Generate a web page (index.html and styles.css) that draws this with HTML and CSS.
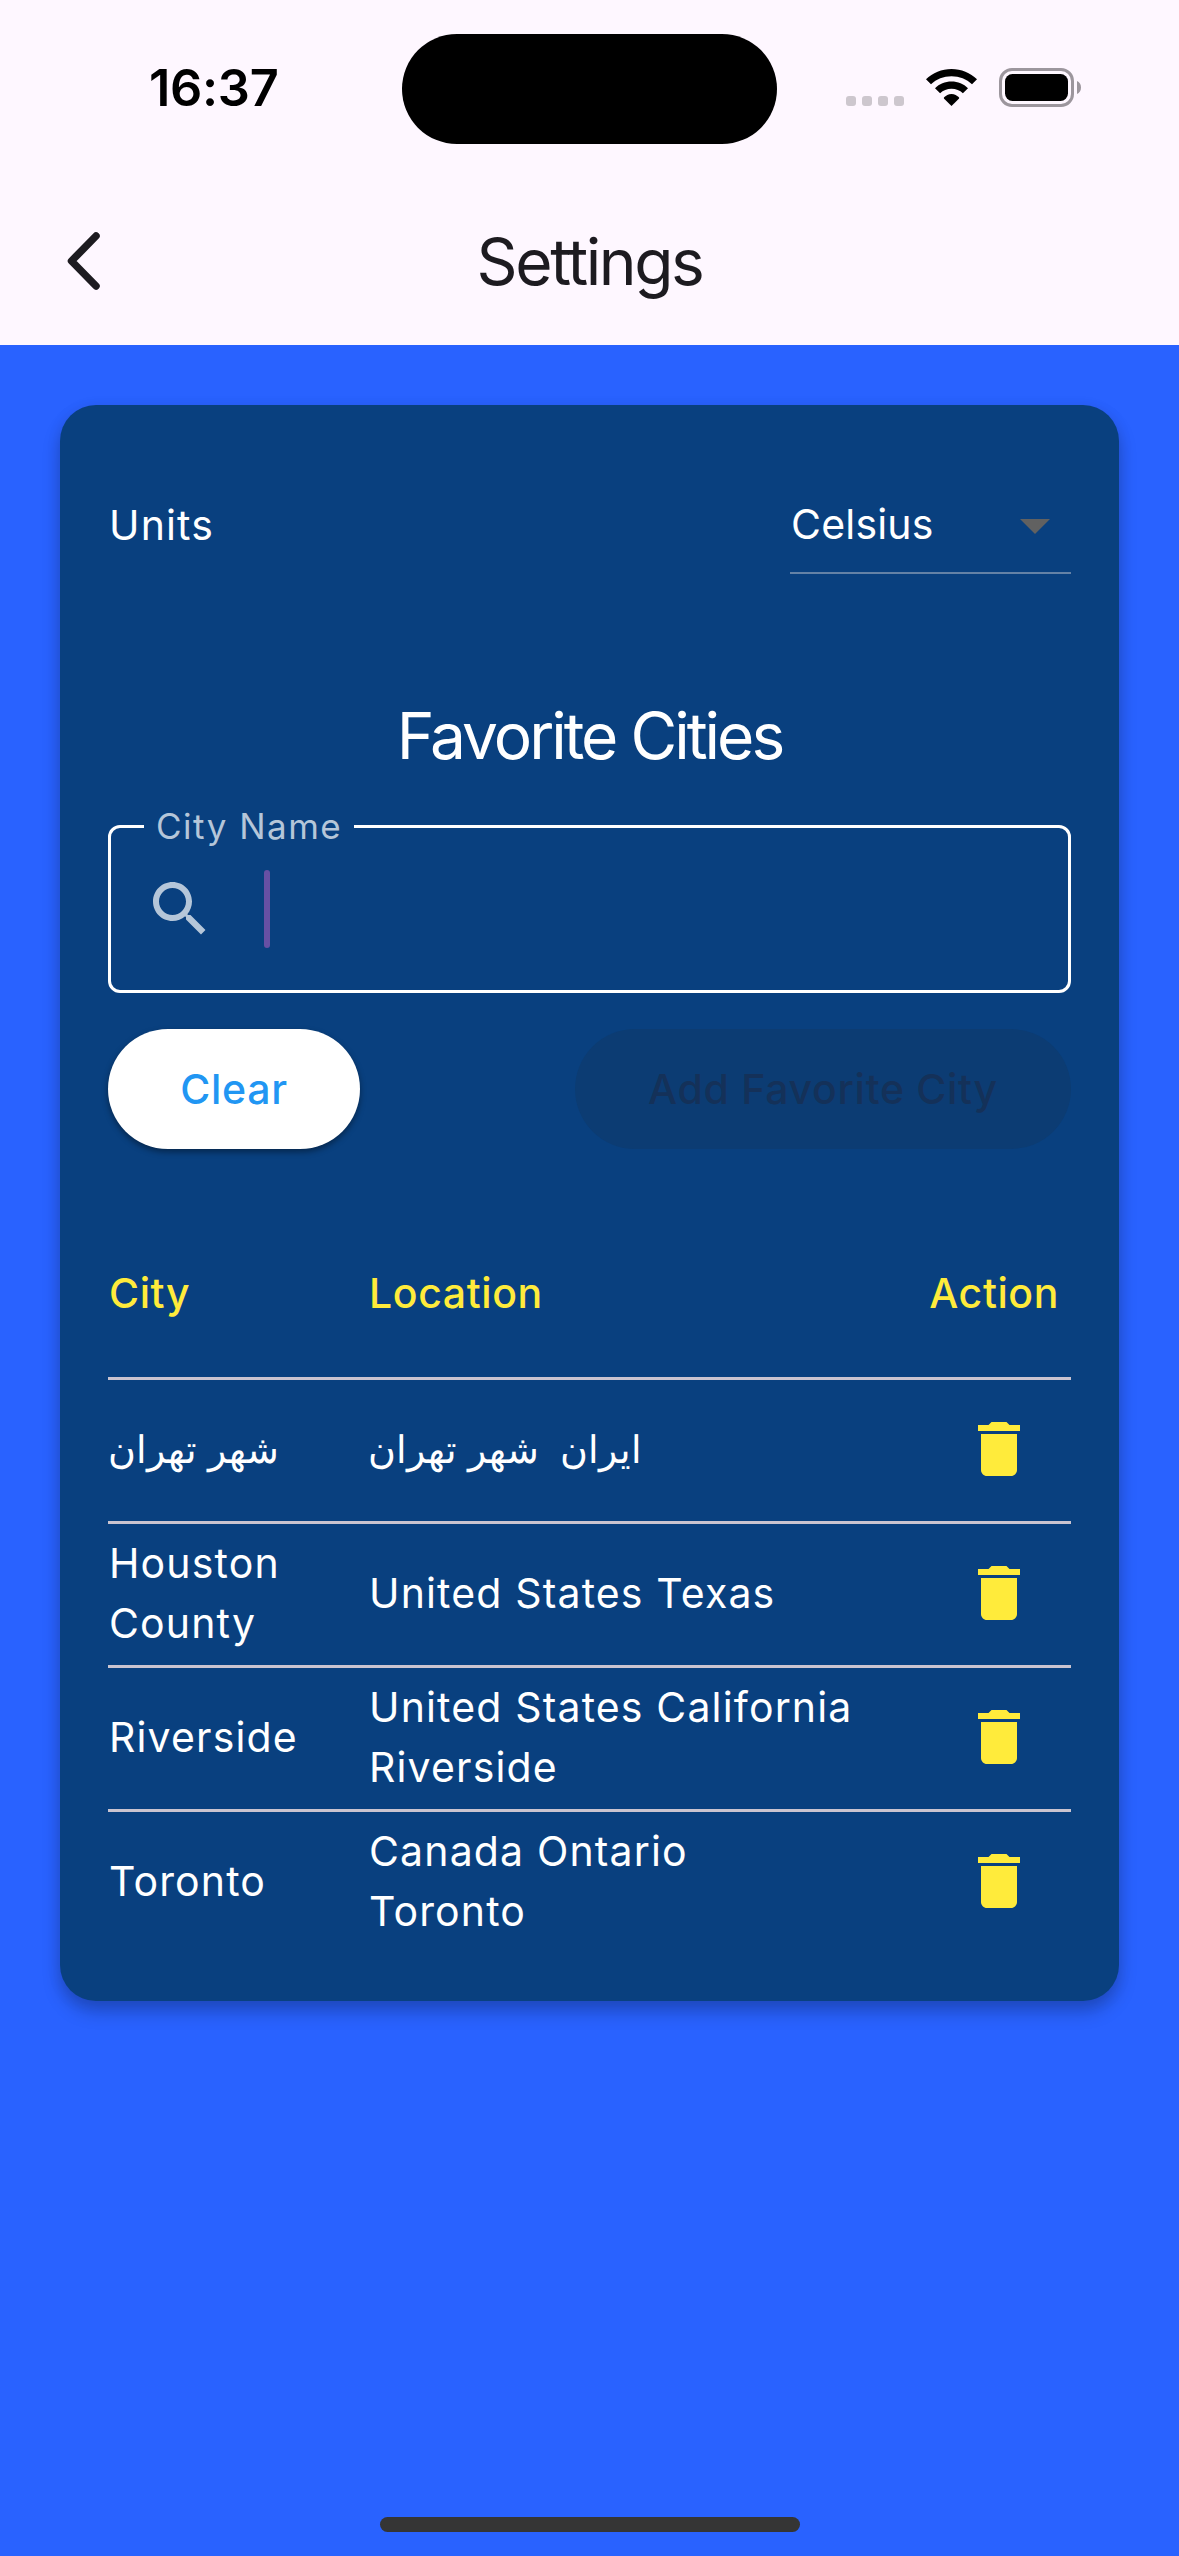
FILE: index.html
```html
<!DOCTYPE html>
<html lang="en">
<head>
<meta charset="utf-8">
<title>Settings</title>
<link rel="stylesheet" href="styles.css">
</head>
<body>
<div class="screen">
  <header class="header">
    <div class="status-bar">
      <div class="time">16:37</div>
      <div class="island"></div>
      <div class="indicators">
        <svg class="cell" width="58" height="10" viewBox="0 0 58 10"><rect width="10" height="10" rx="3"/><rect x="16" width="10" height="10" rx="3"/><rect x="32" width="10" height="10" rx="3"/><rect x="48" width="10" height="10" rx="3"/></svg>
        <svg class="wifi" width="51" height="37" viewBox="0 0 51 37"><path d="M25.500 0C35.300 0 44.300 3.900 51 10.300L46 15.300C40.500 10.200 33.400 7.300 25.500 7.300S10.500 10.200 5 15.300L0 10.300C6.700 3.900 15.700 0 25.500 0Z"/><path d="M25.500 12.600C31.900 12.600 37.700 15.100 42 19.200L36.900 24.300C33.900 21.500 29.900 19.800 25.500 19.800S17.100 21.500 14.100 24.300L9 19.200C13.300 15.100 19.100 12.600 25.500 12.600Z"/><path d="M25.500 25C28.500 25 31.200 26.500 33.100 28.600L33.100 29.500L25.500 37L17.900 29.500L17.900 28.600C19.800 26.500 22.500 25 25.500 25Z"/></svg>
        <svg class="battery" width="82" height="39" viewBox="0 0 82 39"><rect x="1.500" y="1.500" width="72" height="36" rx="11.500" fill="none" stroke="#9c969d" stroke-width="3"/><rect x="6" y="6" width="63" height="27" rx="7.500"/><path d="M78 13C80.500 14 82 16.500 82 19.500S80.500 25 78 26Z" fill="#9c969d"/></svg>
      </div>
    </div>
    <div class="toolbar">
      <svg class="back" width="36" height="60" viewBox="0 0 36 60"><path d="M31 5L6.500 30L31 55" fill="none" stroke="#1d1b20" stroke-width="7.500" stroke-linecap="round" stroke-linejoin="round"/></svg>
      <h1 class="title">Settings</h1>
    </div>
  </header>
  <main class="card">
    <div class="units">
      <span class="units-label">Units</span>
      <div class="select"><span>Celsius</span><svg class="select-arrow" width="30" height="15" viewBox="0 0 30 15"><path d="M0 0H30L15 15Z" fill="#616161"/></svg></div>
    </div>
    <h2 class="heading">Favorite Cities</h2>
    <div class="field">
      <span class="field-label">City Name</span>
      <svg width="72" height="72" viewBox="0 0 24 24"><path fill="#b5c6d9" d="M15.500 14h-.79l-.28-.27C15.410 12.590 16 11.110 16 9.500 16 5.910 13.090 3 9.500 3S3 5.910 3 9.500 5.910 16 9.500 16c1.610 0 3.090-.59 4.230-1.570l.27.28v.79l5 4.990L20.490 19l-4.990-5zm-6 0C7.010 14 5 11.990 5 9.500S7.010 5 9.500 5 14 7.010 14 9.500 11.990 14 9.500 14z"/></svg>
      <span class="caret"></span>
    </div>
    <div class="buttons">
      <button class="btn btn-clear">Clear</button>
      <button class="btn btn-add" disabled>Add Favorite City</button>
    </div>
    <div class="table">
      <div class="row row-head"><span>City</span><span>Location</span><span class="th-action">Action</span></div>
      <div class="row"><span class="fa">شهر تهران</span><span class="fa">ایران&nbsp; شهر تهران</span><svg class="trash" viewBox="0 0 24 24"><path d="M6 19c0 1.100.9 2 2 2h8c1.100 0 2-.9 2-2V7H6v12zM19 4h-3.500l-1-1h-5l-1 1H5v2h14V4z"/></svg></div>
      <div class="row"><span>Houston<br>County</span><span>United States Texas</span><svg class="trash" viewBox="0 0 24 24"><path d="M6 19c0 1.100.9 2 2 2h8c1.100 0 2-.9 2-2V7H6v12zM19 4h-3.500l-1-1h-5l-1 1H5v2h14V4z"/></svg></div>
      <div class="row"><span>Riverside</span><span>United States California<br>Riverside</span><svg class="trash" viewBox="0 0 24 24"><path d="M6 19c0 1.100.9 2 2 2h8c1.100 0 2-.9 2-2V7H6v12zM19 4h-3.500l-1-1h-5l-1 1H5v2h14V4z"/></svg></div>
      <div class="row"><span>Toronto</span><span>Canada Ontario<br>Toronto</span><svg class="trash" viewBox="0 0 24 24"><path d="M6 19c0 1.100.9 2 2 2h8c1.100 0 2-.9 2-2V7H6v12zM19 4h-3.500l-1-1h-5l-1 1H5v2h14V4z"/></svg></div>
    </div>
  </main>
  <div class="home"></div>
</div>
</body>
</html>
```

FILE: styles.css
```css
* { box-sizing: border-box; margin: 0; padding: 0; }
body { width: 1179px; height: 2556px; background: #2962ff; font-family: Inter, "Liberation Sans", sans-serif; }
.screen { width: 1179px; height: 2556px; display: flex; flex-direction: column; overflow: hidden; }

/* Status bar and toolbar */
.header { height: 345px; background: #fef7ff; flex: none; }
.status-bar { height: 177px; display: grid; grid-template-columns: 402px 375px 402px; align-items: start; }
.time { padding: 58px 0 0 149px; font-size: 50.5px; line-height: 60px; font-weight: 600; letter-spacing: -.3px; color: #000; }
.island { height: 110px; margin-top: 34px; border-radius: 55px; background: #000; }
.indicators { display: flex; padding: 68px 0 0 69px; }
.cell { margin: 28px 22px 0 0; fill: #cdc7ce; }
.wifi { margin: 1px 22px 0 0; }
.toolbar { height: 168px; display: grid; grid-template-columns: 1fr auto 1fr; align-items: center; padding: 0 65px; }
.title { grid-column: 2; padding-top: 2px; font-size: 64px; line-height: 84px; font-weight: 400; letter-spacing: -2.4px; color: #1d1b20; }

/* Settings card */
.card { margin: 60px 60px 0; height: 1596px; padding: 69px 48px 48px; flex: none; border-radius: 36px; background: #09407f; color: #fff; box-shadow: 0 11px 18px rgba(0,0,0,.22), 0 3px 15px rgba(0,0,0,.08); font-size: 41px; line-height: 60px; letter-spacing: 1.15px; }
.units { display: flex; justify-content: space-between; }
.units-label { line-height: 102px; padding-left: 1px; }
.select { width: 281px; height: 100px; display: flex; justify-content: space-between; align-items: center; padding: 2px 21px 0 1px; border-bottom: 2px solid #6482a6; letter-spacing: .2px; }
.select-arrow { margin-top: 4px; }
.heading { margin-top: 118px; font-size: 64px; line-height: 84px; font-weight: 400; letter-spacing: -3px; text-align: center; }
.field { position: relative; margin-top: 47px; height: 168px; display: flex; align-items: center; padding: 0 33px; border: 3px solid #fff; border-radius: 12px; }
.field-label { position: absolute; left: 33px; top: -22px; width: 210px; line-height: 40px; padding-left: 12px; background: #09407f; color: #b5c6d9; font-size: 35px; letter-spacing: 1.5px; white-space: nowrap; }
.caret { width: 6px; height: 78px; margin-left: 48px; border-radius: 3px; background: #6750a4; }
.buttons { display: flex; justify-content: space-between; margin-top: 36px; }
.btn { height: 120px; border: 0; border-radius: 60px; font: 500 41px/60px Inter, sans-serif; letter-spacing: .7px; }
.btn-clear { width: 252px; background: #fff; color: #2196f3; box-shadow: 0 3px 6px rgba(0,0,0,.4); }
.btn-add { width: 496px; background: #0c3c73; color: #143159; }

/* Favorite cities table */
.table { margin-top: 60px; }
.row { display: grid; grid-template-columns: 260px 1fr 144px; align-items: center; height: 144px; padding: 0 0 3px 1px; border-top: 3px solid #cac4d0; }
.row-head { height: 168px; padding-bottom: 0; border: 0; color: #ffeb3b; font-weight: 500; letter-spacing: .6px; }
.th-action { justify-self: end; padding-right: 12px; }
.fa { font-size: 38px; margin-left: -1px; }
.trash { width: 72px; height: 72px; justify-self: center; fill: #ffeb3b; }

.home { width: 420px; height: 15px; margin: auto auto 24px; border-radius: 8px; background: #353535; }
```
